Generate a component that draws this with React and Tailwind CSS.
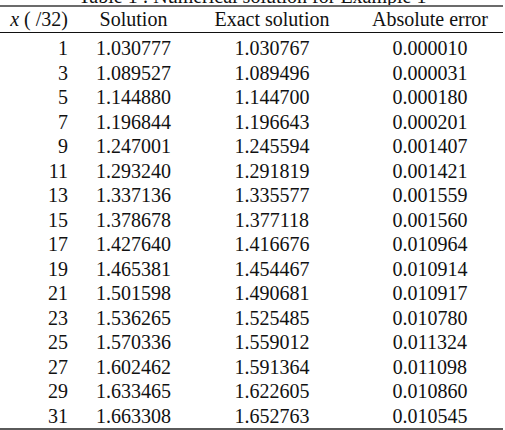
import React from "react";

const rows = [
  ["1", "1.030777", "1.030767", "0.000010"],
  ["3", "1.089527", "1.089496", "0.000031"],
  ["5", "1.144880", "1.144700", "0.000180"],
  ["7", "1.196844", "1.196643", "0.000201"],
  ["9", "1.247001", "1.245594", "0.001407"],
  ["11", "1.293240", "1.291819", "0.001421"],
  ["13", "1.337136", "1.335577", "0.001559"],
  ["15", "1.378678", "1.377118", "0.001560"],
  ["17", "1.427640", "1.416676", "0.010964"],
  ["19", "1.465381", "1.454467", "0.010914"],
  ["21", "1.501598", "1.490681", "0.010917"],
  ["23", "1.536265", "1.525485", "0.010780"],
  ["25", "1.570336", "1.559012", "0.011324"],
  ["27", "1.602462", "1.591364", "0.011098"],
  ["29", "1.633465", "1.622605", "0.010860"],
  ["31", "1.663308", "1.652763", "0.010545"],
];

export default function App() {
  return (
    <div
      className="w-[505px] h-[430px] overflow-hidden bg-white text-[#111] text-[20px]"
      style={{ fontFamily: '"Liberation Serif", "Times New Roman", serif' }}
    >
      <div className="h-[5px] overflow-hidden relative">
        <div className="absolute left-0 right-0 bottom-[-1px] text-center leading-[19px] whitespace-nowrap">
          Table 1 : Numerical solution for Example 1
        </div>
      </div>
      <div className="w-[503px]">
        <div className="h-[2px] bg-[#6b6b6b]" />
        <div className="flex h-[25px] items-center leading-[25px]">
          <div className="w-[80px] text-right pr-[12px] whitespace-nowrap">
            <span className="italic">x</span> ( /32)
          </div>
          <div className="w-[107px] text-center">Solution</div>
          <div className="w-[170px] text-center">Exact solution</div>
          <div className="flex-1 text-center">Absolute error</div>
        </div>
        <div className="h-[1px] bg-[#111]" />
        <div className="pt-[3px]">
          {rows.map((r) => (
            <div key={r[0]} className="flex h-[24.5px] items-center leading-[24.5px]">
              <div className="w-[80px] text-right pr-[12px]">{r[0]}</div>
              <div className="w-[107px] text-center">{r[1]}</div>
              <div className="w-[170px] text-center">{r[2]}</div>
              <div className="flex-1 text-center">{r[3]}</div>
            </div>
          ))}
        </div>
        <div className="h-[2px] bg-[#5a5a5a]" />
        <div className="flex h-[4px]">
          <div className="w-[80px] border-r border-[#888]" />
          <div className="w-[107px] border-r border-[#888]" />
          <div className="w-[170px] border-r border-[#888]" />
          <div className="flex-1" />
        </div>
      </div>
    </div>
  );
}
